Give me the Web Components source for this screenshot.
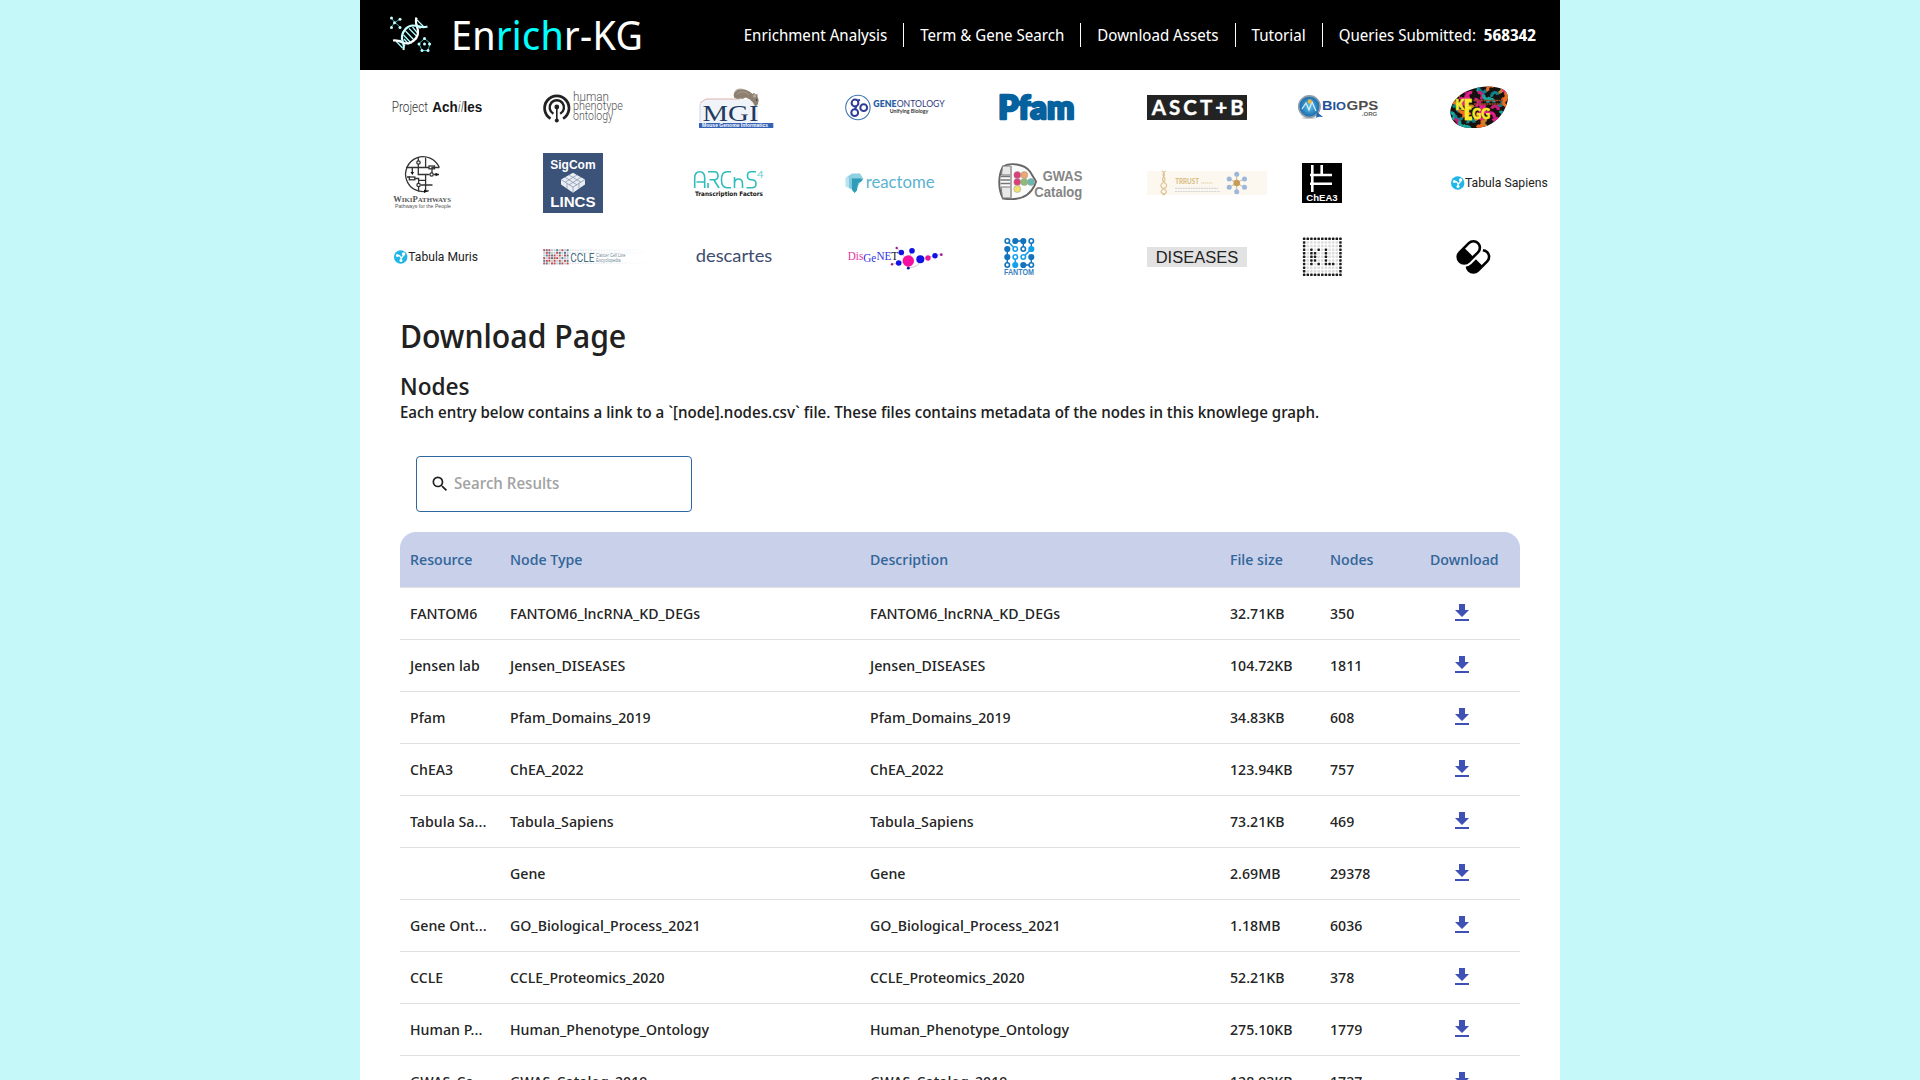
<!DOCTYPE html>
<html lang="en">
<head>
<meta charset="utf-8">
<title>Enrichr-KG</title>
<style>
html,body{margin:0;height:1080px;overflow:hidden}
body{background:#c5f9f9;font-family:"Noto Sans Display","Noto Sans",sans-serif}
</style>
</head>
<body>
<kg-app></kg-app>
<script>
const define = (name, html, setup) => customElements.define(name, class extends HTMLElement {
  connectedCallback() {
    if (this.shadowRoot) return;
    const t = document.createElement('template');
    t.innerHTML = typeof html === 'function' ? html(this) : html;
    this.attachShadow({mode: 'open'}).append(t.content.cloneNode(true));
    if (setup) setup(this);
  }
});

/* Text helper for logos: x, baseline, width, size, fill, content, extra attributes */
const T = (x, y, w, size, fill, s, extra = '') =>
  `<text x="${x}" y="${y}" textLength="${w}" ${extra.includes('lengthAdjust') ? '' : 'lengthAdjust="spacingAndGlyphs"'} font-size="${size}" fill="${fill}" ${extra}>${s}</text>`;
const C = (x, y, r, fill, extra = '') => `<circle cx="${x}" cy="${y}" r="${r}" fill="${fill}" ${extra}/>`;
const LIB = 'font-family="Liberation Sans"', LIBB = LIB + ' font-weight="700"', SER = 'font-family="Liberation Serif"';

const tabula = (cx, cy) => C(cx, cy, 6.7, '#1fb6e8') +
  `<path d="M${cx-3.4} ${cy-1.4}h2.2l1.8 2.6 2.6-3.4M${cx+.4} ${cy+1}v3" stroke="#fff" stroke-width="1.3" fill="none"/>` +
  C(cx-3.3, cy-1.4, 1.5, '#fff') + C(cx+2.9, cy-3, 1.7, '#fff') + C(cx+.3, cy+3.6, 1.5, '#fff');

const kegg = () => {
  const cols = ['#e0218a','#f26b21','#1aa6a0','#e0218a','#c9822a','#12808c','#c81e78'];
  let s = '', n = 0;
  for (let r = 0; r < 7; r++) for (let c = 0; c < 8; c++, n++) {
    const x = 1451 + c * 8 + (r % 2) * 4, y = 89 + r * 6.8, a = (n * 137) % 360;
    s += `<path d="M${x-3.3} ${y}a3.3 3.3 0 0 1 6.6 0" transform="rotate(${a} ${x} ${y})" fill="none" stroke="${cols[(n * 3 + r) % 7]}" stroke-width="3.200"/>`;
  }
  return s;
};

const ccleDots = () => {
  let s = '';
  const p = ['rbrggbgrgb','grbggrbgbg','gbrbrgrgrb','rgrbrrgbgg','brrgrgrgrb','rbgrrgbrgr'];
  for (let r = 0; r < 6; r++) for (let c = 0; c < 10; c++) {
    const k = p[r][c];
    s += `<rect x="${543.2 + c*2.6}" y="${249.2 + r*2.65}" width="2" height="2" fill="${k==='r'?'#c0504f':k==='b'?'#587b93':'#c2cdd4'}"/>`;
  }
  for (let c = 0; c < 30; c++) for (const y of [249.5, 252.1, 262.6])
    s += `<rect x="${569.5 + c*2.6}" y="${y}" width="1.6" height="1.5" fill="#9fb4c0" opacity="${(.38*(1-c/31)).toFixed(2)}"/>`;
  return s;
};

const klDots = () => {
  const on = new Set(['2,3','2,4','2,5','2,6','2,7','4,3','3,4','3,5','3,6','4,7','6,3','6,4','6,5','6,6','6,7','7,7','8,7']);
  let s = '';
  for (let r = 0; r < 11; r++) for (let c = 0; c < 11; c++) {
    const edge = r === 0 || c === 0 || r === 10 || c === 10, dark = edge || on.has(c + ',' + r);
    s += `<rect x="${(1302.9 + c*3.63).toFixed(2)}" y="${(237.6 + r*3.6).toFixed(2)}" width="2.5" height="2.5" rx=".6" fill="${dark ? '#1c1c1c' : '#dcdcdc'}"/>`;
  }
  return s;
};

const fantom = () => {
  const X = [1007.3,1015.3,1023.3,1031.3], Y = [241,249,257,265], a = '#1473bd', b = '#12a0ec';
  let s = `<path d="M1007.3 249v8M1007.3 257v8M1015.3 241h8M1023.3 241v8M1031.3 241v8M1031.3 257v8M1023.3 265h8" stroke="${a}" stroke-width="1.4"/><path d="M1007.3 241l8 8M1023.3 257l8-8M1015.3 257v8" stroke="${b}" stroke-width="1.6"/>`;
  const g = ['O##O','#oO*','#oo#','O*#O'];
  g.forEach((row, r) => [...row].forEach((k, c) => {
    const col = k === 'o' || k === '*' ? b : a;
    s += k === 'o' || k === 'O' ? C(X[c], Y[r], 2.2, '#fff', `stroke="${col}" stroke-width="1.600"`) : C(X[c], Y[r], 3.1, col);
  }));
  return s + T(1004, 275.2, 30, 8.6, '#3b83c0', 'FANTOM', LIBB);
};

const LOGOS = [
  /* Row 1 */
  T(391.8, 111.5, 36.2, 14, '#333', 'Project', 'font-family="Roboto" font-weight="300"') +
    `<text x="432.300" y="111.500" textLength="50" lengthAdjust="spacingAndGlyphs" font-size="14" fill="#161616" ${LIBB}>Ach<tspan font-family="Roboto" font-weight="300" font-style="italic" fill="#555">il</tspan>les</text>`,
  `<g fill="none" stroke="#222"><path d="M550.5 118.6a12.2 12.2 0 1 1 12.6 0" stroke-width="2.8"/><path d="M553.4 113.8a7.2 7.2 0 1 1 6.8 0" stroke-width="2.4"/><path d="M556.8 107v13" stroke-width="1.6"/></g>` + C(556.8,107,2.4,'#222') + C(556.8,120.6,2,'#222') +
    T(573, 101.2, 36, 12, '#555', 'human', 'font-family="Roboto" font-weight="300"') + T(573, 110.4, 50, 12, '#555', 'phenotype', 'font-family="Roboto" font-weight="300"') + T(573, 120, 40, 12, '#555', 'ontology', 'font-family="Roboto" font-weight="300"'),
  `<path d="M700 103l6-4h42l10 3v21h-58z" fill="#f0f4f9"/><path d="M700 103l6-4h34" stroke="#d8a09a" stroke-width=".8" fill="none"/><path d="M700 104v18" stroke="#c5d4e6"/><rect x="699" y="123" width="74.3" height="5" fill="#3563b5"/>` +
    T(702.5, 121, 56, 24, '#203a62', 'MGI', SER) + T(702, 127.2, 66, 5.2, '#fff', 'Mouse Genome Informatics', LIBB) +
    `<path d="M734 97c-1.500-5 3-8.300 9-7.700 4 .4 7 2.500 9.500 4.700l1.500-1.300 1.500 1.800 2-.5v2.500l1.200 3.500-.7 4-2 2.500-1.500-1-1.500-3-3.500-3.200-4-1.700-3 1.400-1.500-.4c-3.500.6-6.500 0-7-1.600z" fill="#8d8071"/><path d="M737 94c4-3.500 9-2.500 12 1" stroke="#a99d8c" fill="none"/><path d="M735 92.500c0-3 4-4 8-3" stroke="#a59a8b" fill="none"/>` + C(754.500,96,1.800,'#b3a598') + C(756.500,100,.7,'#222'),
  C(857.9,107.5,12.2,'#fff','stroke="#4079ad" stroke-width="1.1"') + `<g fill="none" stroke="#303b96" stroke-width="2"><circle cx="855" cy="103" r="3.4"/><circle cx="854.7" cy="112.700" r="3.4"/><circle cx="863.7" cy="107.700" r="3.4"/><path d="M857.500 100.500l2.500-.5M856.500 106l-1.500 3"/></g>` +
    T(873.3,107,23.2,9.4,'#2a5fa5','GENE','font-family="Lato" font-weight="800"') + T(896.7,107,48,9.4,'#303b80','ONTOLOGY','font-family="Lato"') + T(889.7,112.8,38.6,6.2,'#333','Unifying Biology','font-family="Lato" font-weight="700"'),
  T(998.300,118.700,76,31.500,'#06619f','Pfam','font-family="Lato" font-weight="900" stroke="#06619f" stroke-width="2.600" stroke-linejoin="round"'),
  `<rect x="1147" y="95" width="100" height="25" fill="#232323"/>` + T(1151.700,114.700,92,20.500,'#fff','ASCT+B','font-family="Lato" font-weight="700" lengthAdjust="spacing" stroke="#fff" stroke-width=".4"'),
  `<defs><radialGradient id="bg"><stop offset="0" stop-color="#5cc3ef"/><stop offset="1" stop-color="#1766a8"/></radialGradient></defs><ellipse cx="1309" cy="118" rx="7" ry="1" fill="#ccc"/>` + C(1309.4,106.6,10.7,'url(#bg)','stroke="#8c9dab" stroke-width="1.6"') +
    `<path d="M1302 109l4-6 3 7 3-8 4 9" stroke="#d8ecf6" stroke-width="1.3" fill="none"/><path d="M1317 112l6 5-4-.3-3 1z" fill="#2465b0"/>` + C(1309.800,101.500,2.2,'#e5b94f') +
    T(1322,110.3,10.500,13.6,'#24519b','B',LIBB) + T(1332.500,110.3,13.500,10.500,'#24519b','IO',LIBB) + T(1346.500,110.3,31.700,13.6,'#4c4c4c','GPS',LIBB) + T(1361.700,115.800,15.600,6.2,'#666','.ORG',LIBB),
  `<clipPath id="egg"><path d="M1450.300 113c-.5-9 7-18 18-22.500 12-5 26-5 34-1.500 5.500 3 7 8 4.500 15-3 9-9 17-19 21.500-11 4-25 3.500-32-2-3.500-3-5-6-5.500-10.500z"/></clipPath><g clip-path="url(#egg)"><rect x="1448" y="84" width="64" height="46" fill="#17110f"/>${kegg()}</g>` +
    `<path d="M1473.500 100.500h30M1474 104h28" stroke="#9a4a22" stroke-width="1.700" stroke-dasharray="2 .5"/><g font-family="Lato" font-weight="900" stroke="#f6ea2b" stroke-width=".7">` +
    T(1455.300,109.700,9,14.500,'#f6ea2b','K') + `<path d="M1464.800 98.800h7v3.600h-3v4h2.700v3.200h-2.700v6.900h3.200v3.700h-7.200z" fill="#f6ea2b" stroke-width=".3"/>` + T(1472.300,118.700,17.700,14.500,'#f6ea2b','GG') + `</g>`,
  /* Row 2 */
  `<g fill="none" stroke="#333" stroke-width="1.300"><path d="M439.300 167.500a17.500 17.500 0 1 0-10.500 23.200"/><path d="M406 167.500h23M432 167.500h7.300M418.300 158v3M418.300 164v10.500h11M434 174.500h5M412.300 167.500v6M425.600 157.500v10M425.600 174v6.300h-7v3M418.600 186.500v5M410 177h-3M415 178.500h3.600v5M421 185h11.500M425.600 180v11M432 167v6"/><circle cx="418.500" cy="162.500" r="1.700"/><circle cx="431.600" cy="174.500" r="1.700"/><circle cx="418.600" cy="185" r="1.700"/><rect x="429" y="166" width="5.5" height="2.800"/><rect x="409.300" y="177" width="5.500" height="2.800"/></g><path d="M435.500 172.700l3.500 1.800-3.500 1.800zM410.500 172l1.800 3 1.800-3zM424 189.500l4 1.800-4 1.800z" fill="#111"/>` +
    T(393.300,202,57.700,8.800,'#555','W<tspan font-size="7">IKI</tspan>P<tspan font-size="7">ATHWAYS</tspan>',SER + ' font-weight="700"') + T(395,208,56,5.6,'#555','Pathways for the People',LIB),
  `<rect x="543" y="153" width="60" height="60" fill="#3b5279"/>` + T(550.300,168.700,45.300,12.500,'#fff','SigCom',LIBB) + T(550.300,207.300,45.300,15,'#fff','LINCS',LIBB) +
    `<path d="M561 179.500l12-6.700 12 6.700v5l-12 8.200-12-8.200z" fill="#e9edf3"/><path d="M565 177.300l12 7.600M569 175l12 7.300M581 177.300l-12 7.600M577 175l-12 7.300M561 179.500l12 7.600 12-7.600M573 187v5.500M567 183.500v5M579 183.500v5" stroke="#7b8ba8" stroke-width=".7" fill="none"/>`,
  `<g fill="none" stroke="#2fbdbb" stroke-width="1.600"><path d="M694.700 188v-10q0-6.300 5-6.300t5 6.300v10M696.500 182h8"/><path d="M708 188v-5M708 171.700h6.500q3.500 0 3.500 4t-3.500 4h-5M714 180l5 8"/><path d="M731 171.700h-4q-5.500 0-5.500 8t5.500 8h4"/><path d="M734.500 177v11M734.500 184q0-5 4-5t4 5v4"/><path d="M756 171.700h-5q-3.500 0-3.500 4t4 4q4.500 0 4.500 4t-4 4h-5.500"/></g>` +
    T(757,178,6.500,9.500,'#5fcfcc','4','font-family="Lato"') + T(695,195.700,68,6.200,'#111','Transcription Factors','font-family="DejaVu Sans" font-weight="700"'),
  `<g><path d="M845.500 178l5-3.500v14l-5-2z" fill="#b9e3ee"/><path d="M849 176l5-2 7 1v6l-6 10-6-3z" fill="#7cc8dc"/><path d="M852 178.500h11.400l-2 3-3.400 1.500-1 7.500-2.500 2.500-2.500-3z" fill="#2f9cba"/><path d="M847 177l5-3.500h8l3 4.500h-11z" fill="#8fd0e1"/></g>` + T(865.700,188.200,69,18,'#5ab3cf','reactome','font-family="Lato"'),
  `<path d="M1003 166.500c7-4 21-3 27 5l6 10c-1 5-6 13-13 15.500-7 3-14 2.300-20 1.500-5-9-5-23 0-32z" fill="#fafafa" stroke="#666" stroke-width="1.900"/><path d="M1002.500 166h8v9h-9zM1001 187h9.500v11h-8z" fill="#e8e8e8" stroke="#777"/><path d="M1001 176.500h9.500M1000.500 180h10M1000.500 183.500h10" stroke="#777" stroke-width="1.500"/><path d="M1011 166v32" stroke="#aaa" stroke-width="2"/>` +
    [[1017.300,175,'#dc3f78'],[1024.300,175,'#f0a66b'],[1017.300,182,'#dc3f78'],[1024.300,182,'#8fbb72'],[1031,182,'#68b9b0'],[1017.300,189,'#f0e070']].map(a=>C(a[0],a[1],3.500,a[2],'stroke="#999" stroke-width=".5"')).join('') +
    T(1042.700,181,39.600,13.800,'#858585','GWAS',LIBB) + T(1034.300,197,48,13.800,'#858585','Catalog',LIBB),
  `<rect x="1147" y="171" width="120" height="24" fill="#fcf7ef"/><path d="M1162 171q4 3 1.500 6t1.500 6-1.500 6 1.500 6M1165.500 171q-4 3-1.500 6t-1.500 6 1.500 6-1.500 6" fill="none" stroke="#dfc594" stroke-width="1.200"/>` +
    T(1175.300,184,23.600,7.800,'#d6b878','TRRUST','font-family="Lato" font-weight="700"') + `<path d="M1201 183h12" stroke="#e2cfa5" stroke-width="1.200" stroke-dasharray="1.500 .5"/><path d="M1175 188.400h43M1175 191.500h45" stroke="#d5d6da" stroke-width="1.200" stroke-dasharray="2 .6"/><path d="M1236.700 183V175M1236.700 183v8M1236.700 183l7.500-4.300M1236.700 183l7.500 4.300M1236.700 183l-7.500-4.300M1236.700 183l-7.500 4.300" stroke="#c8b996" stroke-width="1"/>` +
    C(1236.700,183,3.300,'#c69d58') + [[1236.700,174.300],[1244.500,179],[1244.500,187.300],[1236.700,191.700],[1229.200,187.300],[1229.200,179]].map(a=>C(a[0],a[1],2.500,'#9bb7dc')).join(''),
  `<rect x="1302" y="163" width="40" height="40"/><path d="M1312.300 165v27M1310 175h22M1321.700 165v10M1310 183.700h22" stroke="#fff" stroke-width="2.600" fill="none"/>` + T(1306.300,201,31.400,9.600,'#fff','ChEA3',LIBB),
  tabula(1457.700,183) + T(1465,187.300,82.700,12.700,'#222','Tabula Sapiens','font-family="Roboto"'),
  /* Row 3 */
  tabula(400.700,257) + T(408.300,261.300,69.700,12.700,'#222','Tabula Muris','font-family="Roboto"'),
  ccleDots() + T(570.300,262,24,13.500,'#426a80','CCLE','font-family="Roboto"') + T(596,257.300,29.500,4.900,'#6e8998','Cancer Cell Line',LIB) + T(596,262,24.500,4.900,'#6e8998','Encyclopedia',LIB),
  T(695.700,262.300,76.600,16.500,'#3e4c6e','descartes','font-family="Lato"'),
  `<path d="M893 264l15-3 4-10M897 248l11 13M908 268q12-1 13-9l14-3.500 6-1M920 259l8-1M908 261v7" stroke="#bbb" stroke-width=".8" fill="none"/>` +
    T(847.700,259.700,15.600,12,'#e5359f','Dis',SER) + T(863.300,262.300,13,12,'#3434e0','Ge',SER) + T(876.500,259.700,15,12,'#3434e0','NE',SER) + T(891.300,259.700,7,12,'#111','T',SER) +
    [[908.300,261,5.700,'#f50fa0'],[901.300,252.500,2.800,'#1111e6'],[912,250.700,2.800,'#1111e6'],[898.700,263,2.800,'#1111e6'],[908.300,268.200,1.400,'#1111a6'],[920.300,259.300,4,'#1111e6'],[928,258,2.700,'#e5189a'],[935,255.700,2.700,'#1111e6'],[941.300,254.700,1.400,'#a5189a'],[896.700,248,1.200,'#a5189a'],[892,264.300,1.200,'#a5189a']].map(a=>C(...a)).join(''),
  fantom(),
  `<rect x="1147" y="247" width="100" height="20" fill="#e2e2e2"/>` + T(1155.700,263,82.600,16.800,'#222','DISEASES',LIB),
  klDots(),
  `<g transform="rotate(-45 1478 261.300)"><rect x="1465" y="254.800" width="26" height="13" rx="6.500" fill="#fff" stroke="#000" stroke-width="2.600"/><path d="M1478 254.800v13h-6.500a6.500 6.500 0 0 1 0-13z"/></g>
  <g transform="rotate(-45 1468.800 252.300)"><rect x="1455.800" y="245.800" width="26" height="13" rx="6.500" fill="#fff" stroke="#fff" stroke-width="7"/><rect x="1455.800" y="245.800" width="26" height="13" rx="6.500" fill="#fff" stroke="#000" stroke-width="2.600"/><path d="M1468.800 245.800v13h-6.500a6.500 6.500 0 0 1 0-13z"/></g>`
];

const BANDS = [[72, 70], [142, 80], [222, 70]];
define('source-logo', el => {
  const i = +el.getAttribute('index'), [y, h] = BANDS[i >> 3];
  return `<style>:host{display:block;height:${h}px}svg{display:block;overflow:visible}</style>
  <svg width="151" height="${h}" viewBox="${392 + 151 * (i % 8)} ${y} 151 ${h}">${LOGOS[i]}</svg>`;
});

define('logo-grid', `<style>:host{display:grid;grid-template-columns:repeat(8,151px);padding:2px 0 0 32px}</style>` +
  LOGOS.map((_, i) => `<source-logo index="${i}"></source-logo>`).join(''));

define('nav-link', `<style>:host{display:flex;align-items:center;height:24px;padding:0 16px;border-left:1px solid #fff;white-space:pre;font-size:16px;color:#fff}:host([first]){border:0}</style><slot></slot>`);

define('kg-header', `<style>
:host{display:flex;align-items:center;justify-content:space-between;height:70px;background:#000;color:#fff;box-sizing:border-box;padding:0 8px 0 29px}
.brand{display:flex;align-items:center;gap:20px;font-size:40px;line-height:54px;letter-spacing:.3px}
.brand span span{color:#0ff}
nav{display:flex}
</style>
<div class="brand">
<svg width="42" height="40" viewBox="389 16 42 40">
<g fill="none" stroke="#35b8b8" stroke-width="1"><path d="M391 19l4 4.500 5-3.500M395 23.500l-4.500 5M395 23.500l5 4.500M424.500 39.500l-5.500 5 3 7 5.500 0 3-7-6-5"/></g>
<g fill="#c9ffff"><circle cx="391.500" cy="19" r="1.500"/><circle cx="400" cy="20.300" r="1.500"/><circle cx="394.500" cy="23.700" r="1.500"/><circle cx="391.500" cy="28.500" r="1.500"/><circle cx="400" cy="28.500" r="1.500"/><circle cx="424.500" cy="39.500" r="1.500"/><circle cx="419" cy="45" r="1.500"/><circle cx="424.500" cy="45" r="1.500"/><circle cx="429.500" cy="45" r="1.500"/><circle cx="422" cy="51.500" r="1.500"/><circle cx="428" cy="51.500" r="1.500"/></g>
<path d="M396 42l6.500 7M399.500 41l5.500 6M403.500 36l8 8.500M405.500 32l8.500 9M404 40l4.500 5M409 29.500l8 8M412.500 28l5 6M417 21l7 7M415.500 24.500l5 5" stroke="#a8ffff" stroke-width="1.300"/>
<path d="M393 41.500c8-1.500 11 5 16.500 2.500s9-7 8.500-12-3.500-8-1.500-13.500" fill="none" stroke="#fff" stroke-width="2.200"/><path d="M403.500 51c2-6-2.500-9-1.500-14s5-10.500 11-10.500 8 3 14.500 1" fill="none" stroke="#c8ffff" stroke-width="2.200"/>
</svg><span>En<span>rich</span>r-KG</span></div>
<nav><nav-link first>Enrichment Analysis</nav-link><nav-link>Term &amp; Gene Search</nav-link><nav-link>Download Assets</nav-link><nav-link>Tutorial</nav-link><nav-link>Queries Submitted:  <b>568342</b></nav-link></nav>`);

define('search-box', `<style>
:host{display:flex;align-items:center;gap:4px;box-sizing:border-box;width:276px;height:56px;border:1px solid #2d69a0;border-radius:4px;padding-left:13px;font-size:16px;color:#a2a2a2}
svg{fill:#212121}
span{padding-bottom:2px}
</style><svg width="20" height="20" viewBox="0 0 24 24"><path d="M15.500 14h-.79l-.28-.27A6.471 6.471 0 0 0 16 9.500 6.500 6.500 0 1 0 9.500 16c1.610 0 3.090-.59 4.230-1.570l.27.28v.79l5 4.990L20.490 19l-4.990-5zm-6 0C7.010 14 5 11.990 5 9.500S7.010 5 9.500 5 14 7.010 14 9.500 11.990 14 9.500 14z"/></svg><span><slot></slot></span>`);

const ROW_CSS = `:host{display:grid;grid-template-columns:100px 360px 360px 100px 100px 100px;align-items:center;box-sizing:border-box;height:52px;border-bottom:1px solid #e0e0e0;font-size:15px;font-weight:500;color:rgba(0,0,0,.87)}
span{padding:0 10px 2px;white-space:nowrap;line-height:22px}`;
define('table-head', `<style>${ROW_CSS}:host{height:56px;background:#c9d0ea;color:#336699;border-radius:16px 16px 0 0}</style>` +
  ['Resource','Node Type','Description','File size','Nodes','Download'].map(t => `<span>${t}</span>`).join(''));
define('table-row', el => {
  const [res, type, size, nodes] = el.getAttribute('cells').split('|');
  return `<style>${ROW_CSS}svg{display:block;margin:0 0 2px 30px;fill:#3f51b5}</style><span>${res}</span><span>${type}</span><span>${type}</span><span>${size}</span><span>${nodes}</span><svg width="24" height="24" viewBox="0 0 24 24"><path d="M19 9h-4V3H9v6H5l7 7 7-7zM5 18v2h14v-2H5z"/></svg>`;
});

const ROWS = ['FANTOM6|FANTOM6_lncRNA_KD_DEGs|32.71KB|350','Jensen lab|Jensen_DISEASES|104.72KB|1811','Pfam|Pfam_Domains_2019|34.83KB|608','ChEA3|ChEA_2022|123.94KB|757','Tabula Sa…|Tabula_Sapiens|73.21KB|469','|Gene|2.69MB|29378','Gene Ont…|GO_Biological_Process_2021|1.18MB|6036','CCLE|CCLE_Proteomics_2020|52.21KB|378','Human P…|Human_Phenotype_Ontology|275.10KB|1779','GWAS_Ca…|GWAS_Catalog_2019|128.93KB|1737'];

define('download-page', `<style>
:host{display:block;padding:22px 40px 0;color:#212121;font-weight:500}
h1{font-size:32px;line-height:44px;font-weight:500;margin:0}
h2{font-size:24px;line-height:32px;font-weight:500;margin:12px 0 0}
p{font-size:16px;line-height:24px;margin:-2px 0 0}
search-box{margin:32px 0 20px 16px}
</style>
<h1>Download Page</h1><h2>Nodes</h2>
<p>Each entry below contains a link to a \`[node].nodes.csv\` file. These files contains metadata of the nodes in this knowlege graph.</p>
<search-box>Search Results</search-box>
<table-head></table-head>` + ROWS.map(r => `<table-row cells="${r}"></table-row>`).join(''));

define('kg-app', `<style>:host{display:block;width:1200px;height:1080px;margin:0 auto;background:#fff;overflow:hidden}</style>
<kg-header></kg-header><logo-grid></logo-grid><download-page></download-page>`);
</script>
</body>
</html>
